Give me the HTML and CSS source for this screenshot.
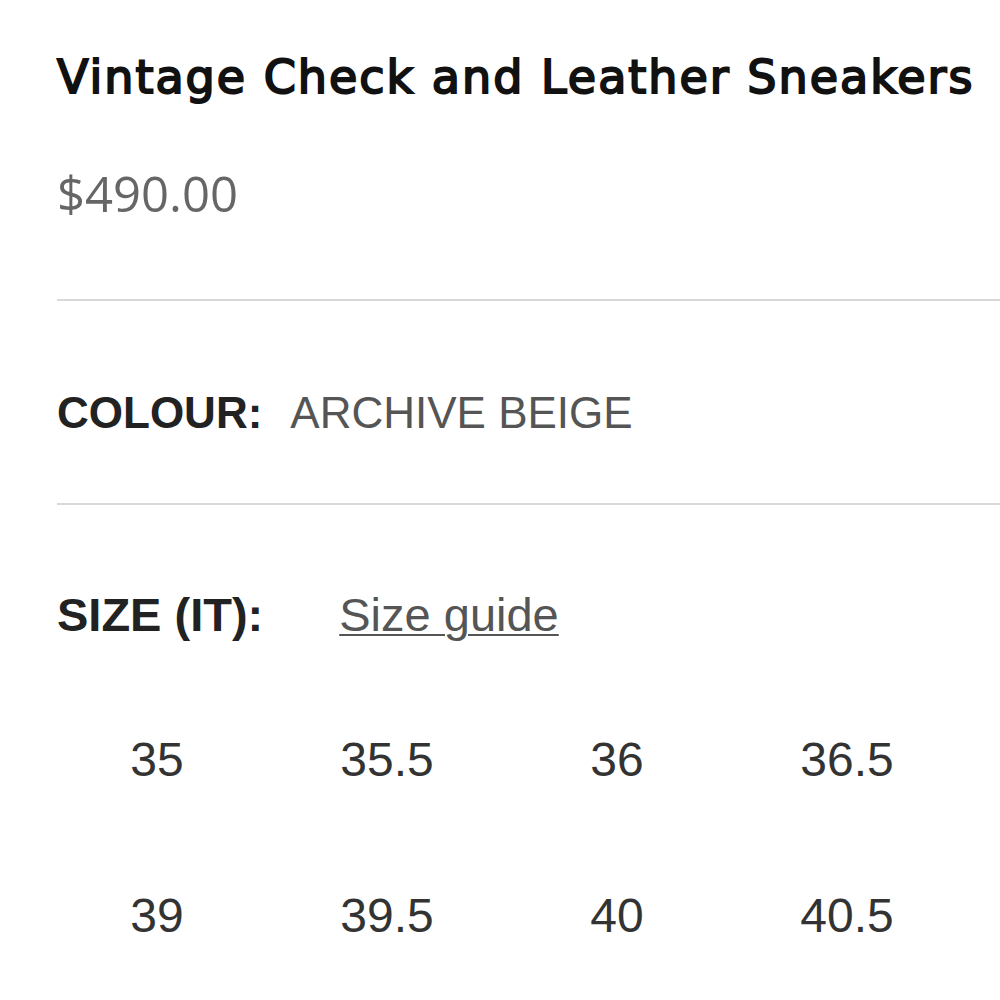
FILE: index.html
```html
<!DOCTYPE html>
<html lang="en">
<head>
<meta charset="utf-8">
<title>Vintage Check and Leather Sneakers</title>
<link rel="stylesheet" href="styles.css">
</head>
<body>
<main class="product">
  <h1 class="title">Vintage Check and Leather Sneakers</h1>
  <p class="price">$490.00</p>
  <hr class="rule rule-first">
  <div class="colour"><span class="label">COLOUR:</span><span class="value">ARCHIVE BEIGE</span></div>
  <hr class="rule rule-second">
  <div class="size-head"><span class="label">SIZE (IT):</span><a class="guide" href="#">Size guide</a></div>
  <div class="sizes">
    <span class="size">35</span>
    <span class="size">35.5</span>
    <span class="size">36</span>
    <span class="size">36.5</span>
    <span class="size">39</span>
    <span class="size">39.5</span>
    <span class="size">40</span>
    <span class="size">40.5</span>
  </div>
</main>
</body>
</html>
```
FILE: styles.css
```css
html, body {
  margin: 0;
  padding: 0;
  background: #fff;
}
body {
  width: 1000px;
  height: 1000px;
  overflow: hidden;
}
.product {
  padding-left: 57px;
  white-space: nowrap;
}
.title {
  margin: 49px 0 0;
  font-family: "DejaVu Sans", sans-serif;
  font-weight: 400;
  font-size: 46px;
  line-height: 56px;
  letter-spacing: 2px;
  color: #111;
  -webkit-text-stroke: 2px #111;
}
.price {
  margin: 60px 0 0;
  font-family: "Open Sans", sans-serif;
  font-size: 49px;
  line-height: 56px;
  color: #666;
}
.rule {
  border: 0;
  height: 2px;
  background: #d9d9d9;
  margin: 0;
}
.rule-first { margin-top: 78px; }
.colour {
  margin-top: 87px;
  font-family: "Liberation Sans", Arial, sans-serif;
  font-size: 44px;
  line-height: 50px;
  display: flex;
  gap: 28px;
}
.label {
  font-weight: 700;
  color: #222;
}
.value {
  color: #555;
}
.rule-second { margin-top: 65px; }
.size-head {
  margin-top: 85px;
  font-family: "Liberation Sans", Arial, sans-serif;
  font-size: 47px;
  line-height: 50px;
  display: flex;
  gap: 76px;
}
.guide {
  color: #555;
  text-decoration: underline;
  text-underline-offset: 3px;
  text-decoration-thickness: 2px;
}
.sizes {
  margin: 92px 0 0 -15px;
  display: grid;
  grid-template-columns: repeat(4, 230px);
  row-gap: 100px;
  font-family: "Liberation Sans", Arial, sans-serif;
  font-size: 48px;
  line-height: 56px;
  color: #333;
}
.size {
  text-align: center;
}
```
